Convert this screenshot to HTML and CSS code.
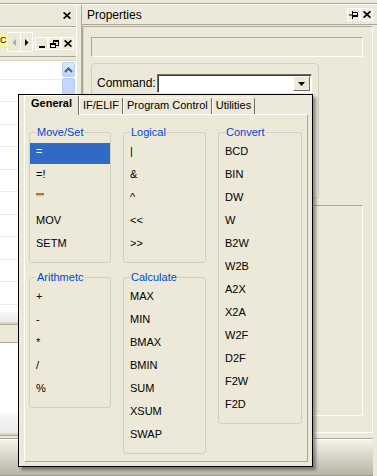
FILE: index.html
```html
<!DOCTYPE html>
<html lang="en">
<head>
    <meta charset="UTF-8">
    <meta name="viewport" content="width=device-width, initial-scale=1.0">
    <title>Properties</title>
    <link rel="stylesheet" href="styles.css">
</head>
<body>
    <div class="window">
        <div class="topline"></div>
        <div class="workspace">
            <div class="left-pane">
                <div class="pane-title">
                    <span class="title-btn plain">
                        <svg width="8" height="7" viewBox="0 0 8 7"><path d="M0.6 0.4 7.4 6.6M7.4 0.4 0.6 6.6" stroke="#000" stroke-width="1.7"/></svg>
                    </span>
                </div>
                <div class="doc-bar">
                    <span class="doc-tab">C</span>
                    <span class="nav-btns">
                        <span class="nav-btn"><svg width="4" height="7" viewBox="0 0 4 7"><path d="M4 0v7L0.5 3.5z" fill="#aca899"/></svg></span>
                        <span class="nav-btn"><svg width="4" height="7" viewBox="0 0 4 7"><path d="M0 0v7l3.5-3.5z" fill="#000"/></svg></span>
                    </span>
                    <span class="win-btn">
                        <svg width="7" height="8" viewBox="0 0 7 8"><rect x="1" y="6" width="6" height="2"/></svg>
                    </span>
                    <span class="win-btn">
                        <svg width="9" height="8" viewBox="0 0 9 8"><path d="M3 0h6v2H3zM8 2h1v4H8zM6 5h2v1H6zM3 2h1v1H3zM0 3h6v2H0zM0 5h1v3H0zM5 5h1v3H5zM1 7h4v1H1z"/></svg>
                    </span>
                    <span class="win-btn">
                        <svg width="8" height="7" viewBox="0 0 8 7"><path d="M0.6 0.4 7.4 6.6M7.4 0.4 0.6 6.6" stroke="#000" stroke-width="1.7"/></svg>
                    </span>
                </div>
                <div class="list-area">
                    <div class="list-rows"></div>
                    <div class="vscroll">
                        <div class="scroll-up">
                            <svg width="9" height="6" viewBox="0 0 9 6"><path d="M1 5 4.5 1.5 8 5" stroke="#4d6185" stroke-width="2" fill="none"/></svg>
                        </div>
                        <div class="scroll-thumb"></div>
                    </div>
                </div>
                <div class="hbar"></div>
                <div class="white-area"></div>
                <div class="lower-band"></div>
            </div>
            <div class="splitter"></div>
            <div class="right-pane">
                <div class="props-title">
                    <span class="props-name">Properties</span>
                    <span class="title-btns">
                        <span class="title-btn">
                            <svg width="10" height="8" viewBox="0 0 10 8"><path d="M0 4h3.5" stroke="#000"/><path d="M3.5 0v8" stroke="#000"/><path d="M4 1.5h4.5v4H4" stroke="#000" fill="none"/><path d="M4 5h5" stroke="#000" stroke-width="2"/></svg>
                        </span>
                        <span class="title-btn">
                            <svg width="8" height="7" viewBox="0 0 8 7"><path d="M0.6 0.4 7.4 6.6M7.4 0.4 0.6 6.6" stroke="#000" stroke-width="1.7"/></svg>
                        </span>
                    </span>
                </div>
                <div class="props-frame">
                    <div class="props-edit"></div>
                    <div class="cmd-group">
                        <label class="cmd-label">Command:</label>
                        <div class="combo">
                            <div class="combo-field"></div>
                            <div class="combo-btn">
                                <svg width="7" height="4" viewBox="0 0 7 4"><path d="M0 0h7L3.5 4z"/></svg>
                            </div>
                        </div>
                    </div>
                    <div class="props-lower"></div>
                </div>
            </div>
        </div>
        <div class="statusbar"></div>
    </div>

    <div class="popup">
        <div class="tab-row">
            <div class="tab active">General</div>
            <div class="tab">IF/ELIF</div>
            <div class="tab">Program Control</div>
            <div class="tab">Utilities</div>
        </div>
        <div class="tab-panel">
            <fieldset class="group">
                <legend>Move/Set</legend>
                <ul class="ops">
                    <li class="selected">=</li>
                    <li>=!</li>
                    <li>&quot;&quot;</li>
                    <li>MOV</li>
                    <li>SETM</li>
                </ul>
            </fieldset>
            <fieldset class="group">
                <legend>Logical</legend>
                <ul class="ops">
                    <li>|</li>
                    <li>&amp;</li>
                    <li>^</li>
                    <li>&lt;&lt;</li>
                    <li>&gt;&gt;</li>
                </ul>
            </fieldset>
            <fieldset class="group convert">
                <legend>Convert</legend>
                <ul class="ops">
                    <li>BCD</li>
                    <li>BIN</li>
                    <li>DW</li>
                    <li>W</li>
                    <li>B2W</li>
                    <li>W2B</li>
                    <li>A2X</li>
                    <li>X2A</li>
                    <li>W2F</li>
                    <li>D2F</li>
                    <li>F2W</li>
                    <li>F2D</li>
                </ul>
            </fieldset>
            <fieldset class="group">
                <legend>Arithmetc</legend>
                <ul class="ops">
                    <li>+</li>
                    <li>-</li>
                    <li>*</li>
                    <li>/</li>
                    <li>%</li>
                </ul>
            </fieldset>
            <fieldset class="group">
                <legend>Calculate</legend>
                <ul class="ops">
                    <li>MAX</li>
                    <li>MIN</li>
                    <li>BMAX</li>
                    <li>BMIN</li>
                    <li>SUM</li>
                    <li>XSUM</li>
                    <li>SWAP</li>
                </ul>
            </fieldset>
        </div>
    </div>
</body>
</html>
```

FILE: styles.css
```css
* {
    box-sizing: border-box;
}
body {
    margin: 0;
    width: 377px;
    height: 476px;
    overflow: hidden;
    position: relative;
    background-color: #ece9d8;
    font-family: "Liberation Sans", Arial, sans-serif;
    font-size: 11px;
    color: #000;
}
svg {
    display: block;
}
.window {
    display: flex;
    flex-direction: column;
    height: 476px;
}
.topline {
    height: 4px;
    border-bottom: 1px solid #aca899;
}
.workspace {
    flex: 1;
    display: flex;
    min-height: 0;
    border-top: 1px solid #fff;
}

/* left docked pane */
.left-pane {
    width: 76px;
    display: flex;
    flex-direction: column;
}
.pane-title {
    height: 22px;
    display: flex;
    justify-content: flex-end;
    align-items: center;
    padding-right: 3px;
    border-bottom: 1px solid #aca899;
}
.title-btn {
    width: 13px;
    height: 13px;
    display: flex;
    align-items: center;
    justify-content: center;
    border: 1px solid #fff;
}
.title-btn.plain {
    border-color: transparent;
}
.doc-bar {
    height: 30px;
    display: flex;
    align-items: flex-start;
    border-top: 1px solid #fff;
    border-bottom: 1px solid #aca899;
}
.doc-tab {
    width: 7px;
    height: 13px;
    margin-top: 6px;
    background-color: #fdf89c;
    font-size: 9px;
    line-height: 13px;
}
.nav-btns {
    display: flex;
    margin: 4px 0 0 0;
    height: 20px;
    border: 1px solid #fff;
}
.nav-btn {
    width: 12px;
    display: flex;
    align-items: center;
    justify-content: center;
}
.nav-btn + .nav-btn {
    border-left: 1px solid #fff;
}
.win-btn {
    width: 13px;
    height: 13px;
    margin-top: 9px;
    display: flex;
    align-items: center;
    justify-content: center;
    border: 1px solid #fff;
}
.nav-btns + .win-btn {
    margin-left: 2px;
}
.list-area {
    height: 252px;
    display: flex;
    margin-top: 3px;
    border-top: 1px solid #d5d2c2;
    background-color: #fff;
}
.list-rows {
    flex: 1;
    background: repeating-linear-gradient(#fff 0, #fff 18px, #ebebeb 18px, #ebebeb 19px, #fff 19px, #fff 22.5px);
}
.vscroll {
    width: 14px;
    padding: 1px 1px 0 0;
    display: flex;
    flex-direction: column;
}
.scroll-up {
    height: 15px;
    display: flex;
    align-items: center;
    justify-content: center;
    border: 1px solid #b9cdf6;
    border-radius: 2px;
    background: linear-gradient(#e2eafe, #bfd0f8);
}
.scroll-thumb {
    flex: 1;
    margin-top: 1px;
    border: 1px solid #b4c8f6;
    border-radius: 2px;
    background-color: #c6d5fa;
}
.hbar {
    height: 31px;
    border-bottom: 1px solid #aca899;
    background: linear-gradient(#f7f7f7 0, #ebebeb 10px, #d9d6c6 10px, #d9d6c6 12px, #aca899 12px, #aca899 13px, #ece9d8 13px);
}
.white-area {
    flex: 1;
    background-color: #fff;
}
.lower-band {
    height: 25px;
    background: linear-gradient(#f7f7f7 0, #ebebeb 20px, #d9d6c6 20px, #d9d6c6 22px, #aca899 22px, #aca899 23px, #ece9d8 23px);
}
.splitter {
    width: 6px;
    border-left: 1px solid #fff;
    border-right: 1px solid #aca899;
}

/* properties pane */
.right-pane {
    flex: 1;
    display: flex;
    flex-direction: column;
}
.props-title {
    height: 20px;
    display: flex;
    align-items: center;
    justify-content: space-between;
    padding: 0 4px 0 5px;
    border-bottom: 1px solid #aca899;
    font-size: 12px;
}
.title-btns {
    display: flex;
}
.props-frame {
    flex: 1;
    margin: 1px 4px 5px 0;
    padding: 10px 9px 0 8px;
    border: 1px solid;
    border-color: #aca899 #fff #fff #aca899;
    box-shadow: inset 1px 0 #d6d3c4;
}
.props-edit {
    height: 20px;
    border: 1px solid;
    border-color: #aca899 #fff #fff #aca899;
}
.cmd-group {
    width: 228px;
    height: 136px;
    margin-top: 6px;
    padding: 10px 5px;
    display: flex;
    align-items: flex-start;
    border: 1px solid #d0d0bf;
    border-radius: 4px;
}
.cmd-label {
    width: 60px;
    line-height: 19px;
    font-size: 12px;
}
.combo {
    width: 155px;
    height: 19px;
    display: flex;
    padding: 1px;
    border: 1px solid;
    border-color: #716f64 #fff #fff #716f64;
    box-shadow: inset 1px 1px #404040;
    background-color: #fff;
}
.combo-field {
    flex: 1;
}
.combo-btn {
    width: 17px;
    display: flex;
    align-items: center;
    justify-content: center;
    border: 1px solid;
    border-color: #fff #716f64 #716f64 #fff;
    background-color: #ece9d8;
}
.props-lower {
    height: 211px;
    margin-top: 6px;
    border: 1px solid;
    border-color: #aca899 #fff #fff #aca899;
}
.statusbar {
    height: 38px;
    margin-right: 4px;
    border-top: 1px solid #aca899;
    border-bottom: 1px solid #9d9a8a;
    box-shadow: inset 0 1px #fff;
    background: linear-gradient(#f6f4ea, #b8b5a3);
}

/* command picker popup */
.popup {
    position: absolute;
    left: 18px;
    top: 94px;
    width: 295px;
    height: 373px;
    display: flex;
    flex-direction: column;
    padding: 0 4px 4px 5px;
    border: 1px solid #000;
    background-color: #ece9d8;
    box-shadow: 3px 3px 3px rgba(0, 0, 0, 0.4);
}
.tab-row {
    height: 19px;
    display: flex;
    align-items: flex-end;
}
.tab {
    height: 17px;
    padding: 0 3px;
    line-height: 15px;
    border: 1px solid;
    border-bottom: none;
    border-color: #fff #716f64 transparent #fff;
    border-radius: 2px 2px 0 0;
    white-space: nowrap;
}
.tab.active {
    position: relative;
    z-index: 1;
    height: 20px;
    margin-bottom: -1px;
    padding: 0 6px;
    font-weight: bold;
    background-color: #ece9d8;
}
.tab-panel {
    flex: 1;
    display: grid;
    grid-template-columns: 82px 83px 84px;
    column-gap: 12px;
    row-gap: 8px;
    align-items: start;
    align-content: start;
    padding: 11px 0 0 4px;
    border: 1px solid;
    border-color: #fff #aca899 #aca899 #fff;
}
.group {
    margin: 0;
    padding: 4px 0;
    min-width: 0;
    border: 1px solid #d0d0bf;
    border-radius: 3px;
}
.group legend {
    margin-left: 6px;
    padding: 0 1px;
    line-height: 13px;
    color: #0046d5;
}
.convert {
    grid-column: 3;
    grid-row: 1 / span 2;
}
.ops {
    list-style: none;
    margin: 0;
    padding: 0;
}
.ops li {
    height: 21px;
    margin-bottom: 2px;
    padding-left: 6px;
    line-height: 17px;
}
.ops li.selected {
    background-color: #316ac5;
    color: #fff;
}
```
